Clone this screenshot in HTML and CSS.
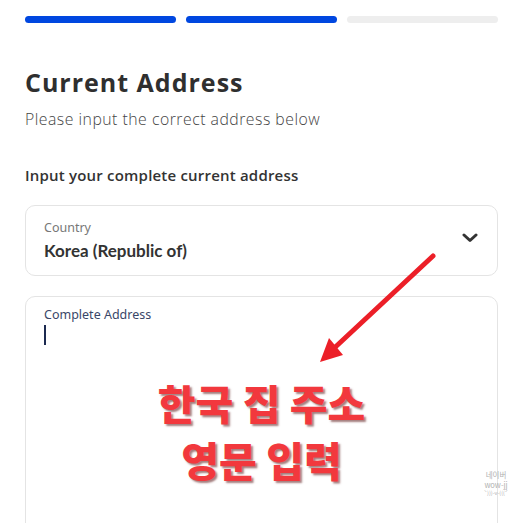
FILE: index.html
```html
<!DOCTYPE html>
<html lang="en">
<head>
  <meta charset="UTF-8">
  <meta name="viewport" content="width=device-width, initial-scale=1.0">
  <title>Current Address</title>
  <link rel="stylesheet" href="styles.css">
</head>
<body>
  <div id="page">
    <!-- Шаги формы -->
    <div class="steps">
      <div class="step done"></div>
      <div class="step done"></div>
      <div class="step"></div>
    </div>

    <h1 class="title">Current Address</h1>
    <p class="subtitle">Please input the correct address below</p>

    <div class="section-label">Input your complete current address</div>

    <!-- Выбор страны -->
    <div class="field select">
      <div class="field-text">
        <div class="field-label">Country</div>
        <div class="field-value">Korea (Republic of)</div>
      </div>
      <svg class="chevron" width="16" height="10" viewBox="0 0 16 10">
        <path d="M2 2 L8 7.5 L14 2" fill="none" stroke="#333" stroke-width="3" stroke-linecap="round" stroke-linejoin="round"/>
      </svg>
    </div>

    <!-- Полный адрес -->
    <div class="field area">
      <div class="area-label">Complete Address</div>
      <div class="caret"></div>
    </div>
  </div>

  <!-- Пометки поверх скриншота -->
  <svg class="arrow" width="523" height="523" viewBox="0 0 523 523">
    <line x1="433" y1="256" x2="330" y2="352" stroke="#ec1f28" stroke-width="5" stroke-linecap="round"/>
    <polygon points="320,362 329,338 343,355" fill="#ec1f28"/>
  </svg>
  <div class="note">
    <div>한국 집 주소</div>
    <div>영문 입력</div>
  </div>
  <div class="watermark">
    <div>네이버</div>
    <div>wow-jj</div>
    <div class="tiny">ˋ)))-v-(((ˊ</div>
  </div>
</body>
</html>
```

FILE: styles.css
```css
* { box-sizing: border-box; }
html, body {
  margin: 0; padding: 0;
  width: 100%; height: 100%;
  overflow: hidden;
  background: #fff;
}
body {
  font-family: "Open Sans", "Noto Sans", sans-serif;
  color: #333;
}
#page {
  padding: 16px 25px 0 25px;
}

/* Полоска шагов */
.steps {
  display: flex;
  gap: 10px;
}
.step {
  flex: 1;
  height: 7px;
  border-radius: 4px;
  background: #eeeeee;
}
.step.done { background: #0047e0; }

.title {
  margin: 43px 0 0;
  font-size: 25px;
  font-weight: 700;
  line-height: 32px;
  letter-spacing: 1px;
  color: #2f2f2f;
}
.subtitle {
  margin: 10px 0 0;
  font-size: 15.8px;
  font-weight: 300;
  line-height: 22px;
  letter-spacing: 0.5px;
  color: #444;
}
.section-label {
  margin-top: 35px;
  font-size: 15px;
  font-weight: 600;
  line-height: 20px;
  letter-spacing: 0.2px;
  color: #333;
}

/* Поля ввода */
.field {
  border: 1px solid #e4e4e4;
  border-radius: 10px;
  background: #fff;
}
.select {
  margin-top: 20px;
  height: 71px;
  padding: 0 19px 0 18px;
  display: flex;
  align-items: center;
  justify-content: space-between;
}
.field-label {
  font-family: "Noto Sans", sans-serif;
  font-size: 12.5px;
  line-height: 16px;
  color: #777;
}
.field-value {
  margin-top: 4px;
  font-family: Lato, sans-serif;
  font-size: 17px;
  font-weight: 700;
  line-height: 22px;
  color: #333;
}
.chevron { margin-top: -6px; }

.area {
  margin-top: 20px;
  height: 260px;
  padding: 10px 18px;
}
.area-label {
  font-family: "Noto Sans", sans-serif;
  font-size: 12.5px;
  line-height: 16px;
  color: #3a4768;
}
.caret {
  margin-top: 2px;
  width: 2px;
  height: 20px;
  background: #1c2a50;
}

/* Пометки */
.arrow {
  position: absolute;
  left: 0; top: 0;
}
.note {
  position: absolute;
  left: 25px;
  width: 473px;
  top: 374px;
  text-align: center;
  font-family: "Noto Sans CJK KR", sans-serif;
  font-size: 41px;
  font-weight: 900;
  line-height: 57px;
  color: #f2383d;
  text-shadow: 2px 2px 2px rgba(90, 20, 20, 0.55);
}
.watermark {
  position: absolute;
  left: 478px;
  top: 470px;
  width: 36px;
  text-align: center;
  font-family: "Noto Sans CJK KR", sans-serif;
  font-size: 7.5px;
  line-height: 9.5px;
  color: #b0b0b0;
}
.watermark .tiny { font-size: 5.5px; line-height: 8px; }
```
